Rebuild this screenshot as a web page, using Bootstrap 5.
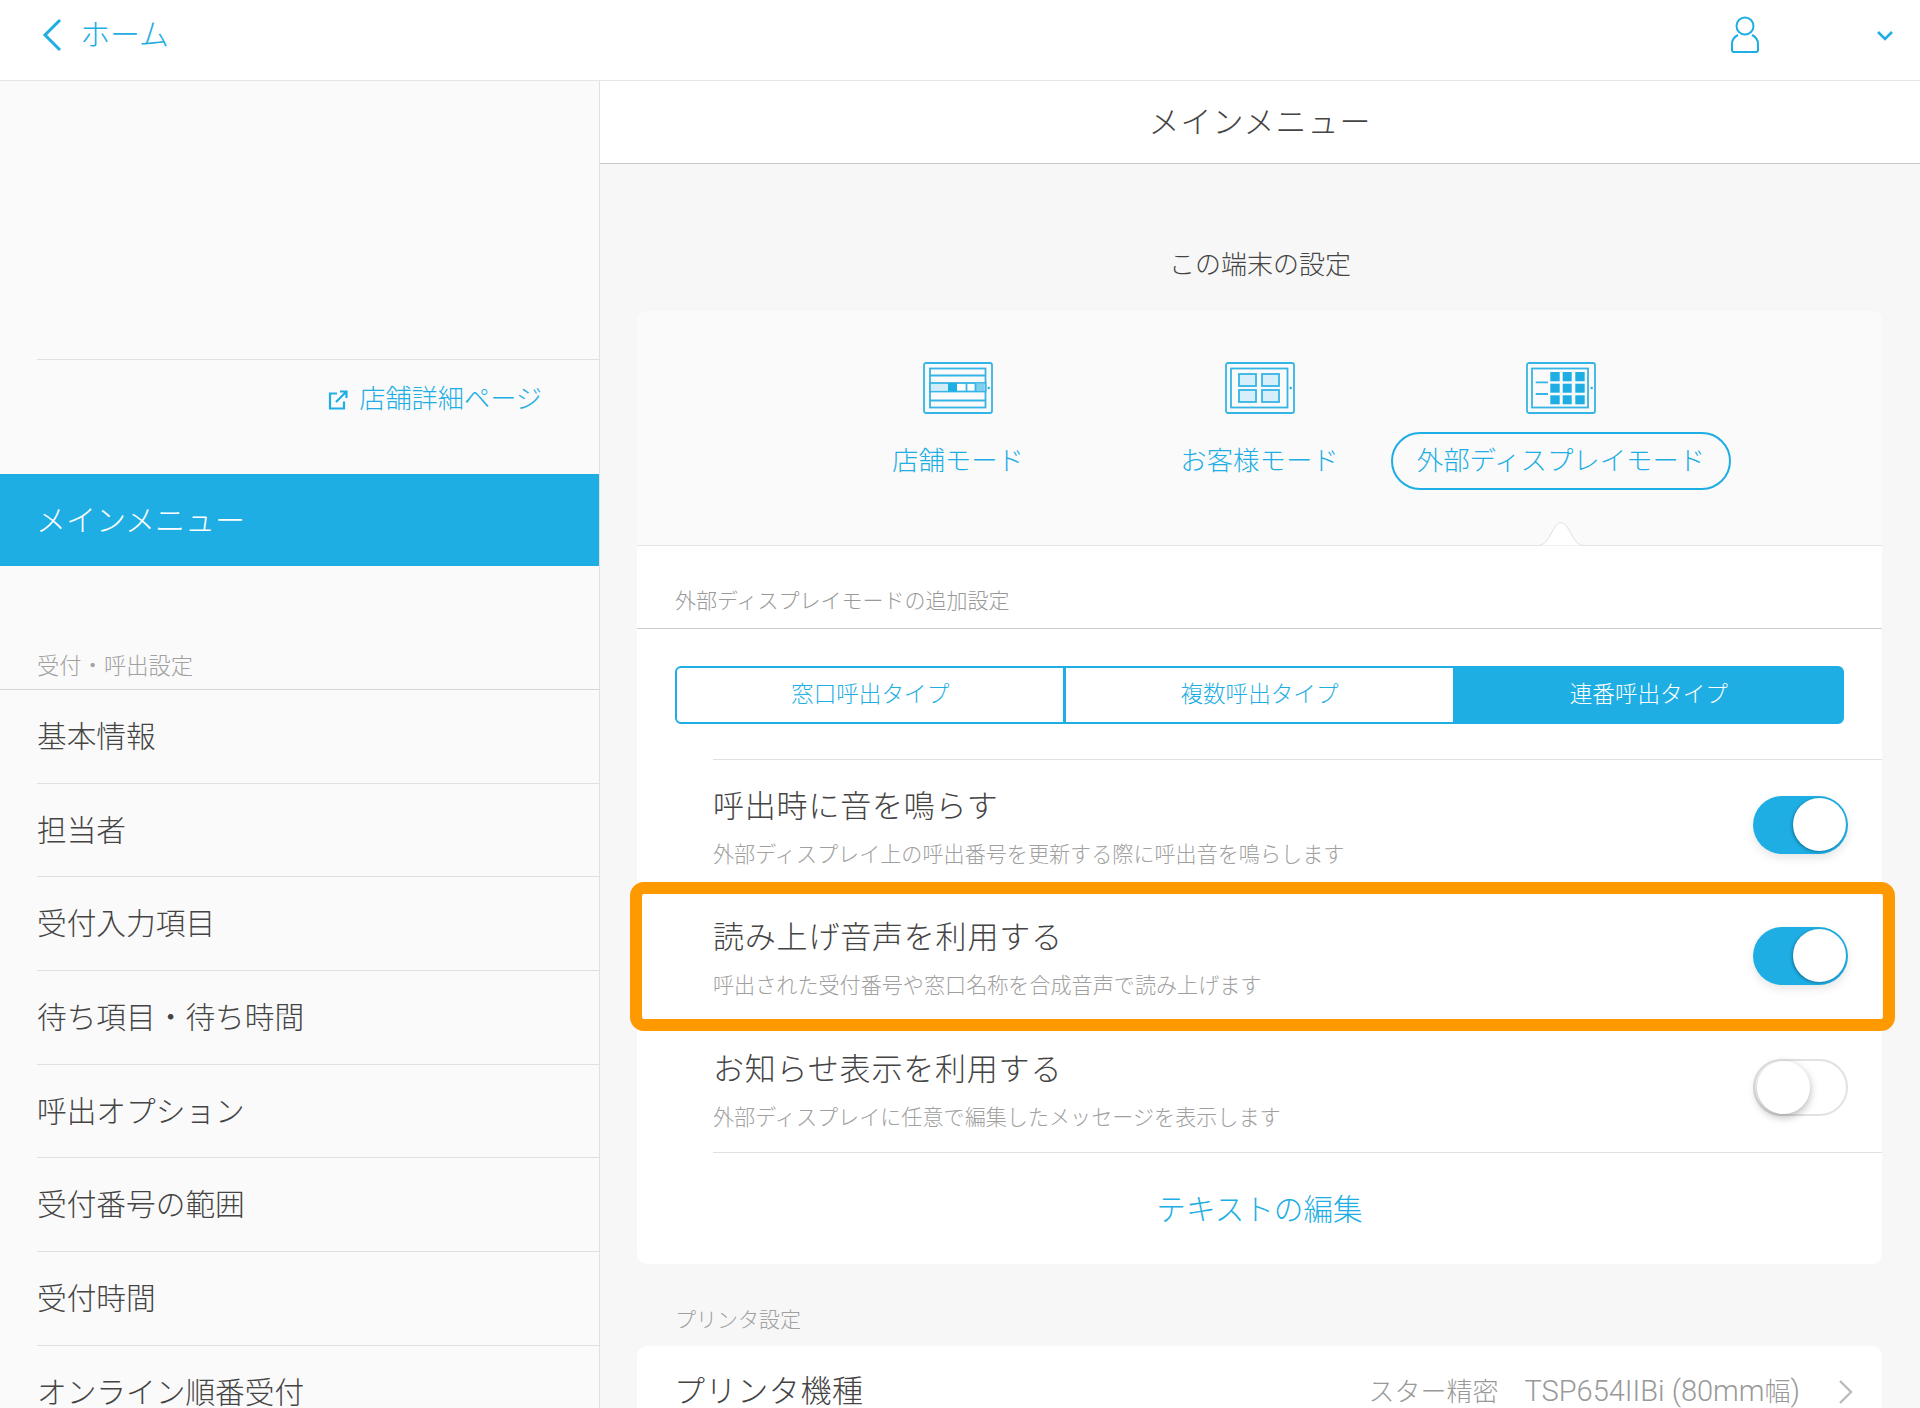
<!DOCTYPE html>
<html lang="ja">
<head>
  <meta charset="UTF-8">
  <meta name="viewport" content="width=device-width, initial-scale=1">
  <title>メインメニュー</title>
  <link href="https://cdn.jsdelivr.net/npm/bootstrap@5.3.0/dist/css/bootstrap.min.css" rel="stylesheet">
  <style>
    html, body { height: 100%; overflow: hidden; }
    body { font-family: "Roboto", "Noto Sans CJK JP", sans-serif; font-weight: 300; color: #444; background: #f7f7f7; }
    a { text-decoration: none; color: #1eaee3; }
    .top-bar { height: 81px; background: #fff; border-bottom: 1px solid #e5e5e5; padding: 0 27px 10px 42px; }
    .top-home { font-size: 30px; line-height: 1; gap: 18px; padding-bottom: 1px; }
    .page-body { height: calc(100% - 81px); }
    .side-col { width: 600px; flex: none; background: #fafafa; border-right: 1px solid #e0e0e0; overflow: hidden; }
    .side-space { height: 279px; margin-left: 37px; border-bottom: 1px solid #e0e0e0; }
    .shop-link { height: 114px; padding: 0 57px 34px 0; font-size: 26.2px; gap: 11px; }
    .side-active { height: 92px; background: #1eaee3; color: #fff; font-size: 30px; padding-left: 36px; }
    .side-head { height: 124px; padding: 0 0 6px 37px; font-size: 22.3px; color: #a0a0a0; border-bottom: 1px solid #d5d5d5; }
    .side-list .list-group-item { height: 93.7px; margin-left: 37px; padding: 1.5px 0 0; background: transparent; border-color: #e0e0e0; font-size: 29.7px; color: #444; display: flex; align-items: center; }
    .main-col { flex: 1; min-width: 0; overflow: hidden; }
    .main-title { height: 83px; padding-top: 2px; background: #fff; border-bottom: 1px solid #c8c8c8; font-size: 31px; letter-spacing: 1px; }
    .sec-title { padding-top: 81px; height: 147px; line-height: 40px; font-size: 26px; text-align: center; }
    .set-card { margin: 0 38px 0 37px; background: #fff; border: 0; border-radius: 10px; }
    .mode-area { height: 235px; padding-top: 51px; background: #fafafa; border-bottom: 1px solid #e5e5e5; border-radius: 10px 10px 0 0; position: relative; }
    .mode-col { width: 301.5px; }
    .mode-pill { height: 58px; margin-top: 18px; padding: 2px 24px 0; border: 2px solid transparent; border-radius: 29px; font-size: 26.4px; white-space: nowrap; color: #1eaee3; }
    .mode-pill.is-on { border-color: #1eaee3; }
    .mode-notch { position: absolute; left: 902px; bottom: -1px; }
    .sub-head { height: 83px; padding: 0 0 12px 38px; font-size: 21px; line-height: 30px; color: #999; border-bottom: 1px solid #ccc; }
    .seg-wrap { padding: 37px 38px 35px; }
    .seg-wrap .btn { height: 58px; font-size: 22.6px; font-weight: 300; color: #1eaee3; background: #fff; border: 2px solid #1eaee3; border-radius: 6px; padding: 0; display: flex; align-items: center; justify-content: center; flex: 1 1 0; }
    .seg-wrap .btn.is-on { background: #1eaee3; color: #fff; flex-basis: 3px; }
    .set-rows { padding-left: 76px; }
    .set-row { height: 131.3px; border-top: 1px solid #e0e0e0; padding-right: 34px; position: relative; }
    .row-name { padding-top: 27px; font-size: 31px; letter-spacing: .8px; line-height: 40px; }
    .row-desc { margin-top: 13px; font-size: 21.1px; line-height: 30px; color: #a0a0a0; }
    .toggle { width: 95px; height: 58px; margin-top: 36px; padding: 2px; border-radius: 29px; background: #1eaee3; box-shadow: 0 4px 10px rgba(0,0,0,.1); flex: none; display: flex; justify-content: flex-end; }
    .toggle-knob { width: 53px; height: 53px; border-radius: 50%; background: #fff; box-shadow: -1px 1px 3px rgba(0,50,80,.45); }
    .toggle.is-off { background: #fff; border: 2px solid #e2e2e2; padding: 0 2px; height: 57px; justify-content: flex-start; box-shadow: none; }
    .toggle.is-off .toggle-knob { box-shadow: 0 3px 8px rgba(0,0,0,.3); }
    .mark-box { position: absolute; z-index: 2; left: -83px; right: -13px; top: -9px; height: 149px; border: 12px solid #f90; border-radius: 14px; pointer-events: none; }
    .edit-row { height: 112px; border-top: 1px solid #e0e0e0; margin-left: 76px; margin-top: -1px; padding: 3px 76px 0 0; font-size: 29.6px; }
    .printer-head { height: 82px; padding: 0 0 11px 75px; font-size: 21px; line-height: 30px; color: #a0a0a0; }
    .printer-row { height: 90px; padding: 2px 28px 0 37px; font-size: 31px; letter-spacing: .6px; }
    .printer-val { font-size: 26px; letter-spacing: 0; color: #999; gap: 38px; }
    .printer-num { font-size: 29px; }
  </style>
</head>
<body>

<div class="top-bar d-flex justify-content-between align-items-center">
  <a href="#" class="top-home d-flex align-items-center">
    <svg width="20" height="34" viewBox="0 0 20 34" fill="none" stroke="#1eaee3" stroke-width="3"><path d="M18 2 3 17l15 15"/></svg>
    ホーム
  </a>
  <div class="d-flex align-items-center">
    <svg width="30" height="38" viewBox="0 0 30 38" fill="none" stroke="#1eaee3" stroke-width="2"><circle cx="15" cy="10" r="8.5"/><path d="M8 19c-4 2-6 5-6 9v6c0 1 1 2 2 2h22c1 0 2-1 2-2v-6c0-4-2-7-6-9"/></svg>
    <svg style="margin-left:117px" width="16" height="11" viewBox="0 0 16 11" fill="none" stroke="#1eaee3" stroke-width="2.6"><path d="m1 2 7 7 7-7"/></svg>
  </div>
</div>

<div class="page-body d-flex">
  <div class="side-col">
    <div class="side-space"></div>
    <a href="#" class="shop-link d-flex justify-content-end align-items-center">
      <svg width="20" height="20" viewBox="0 0 20 20" fill="none" stroke="#1eaee3" stroke-width="2.2"><path d="M9 3.5H2v15h14v-7M8 12 18 2M12 1.5h6.5V8"/></svg>
      店舗詳細ページ
    </a>
    <div class="side-active d-flex align-items-center">メインメニュー</div>
    <div class="side-head d-flex align-items-end">受付・呼出設定</div>
    <ul class="side-list list-group list-group-flush">
      <li class="list-group-item">基本情報</li>
      <li class="list-group-item">担当者</li>
      <li class="list-group-item">受付入力項目</li>
      <li class="list-group-item">待ち項目・待ち時間</li>
      <li class="list-group-item">呼出オプション</li>
      <li class="list-group-item">受付番号の範囲</li>
      <li class="list-group-item">受付時間</li>
      <li class="list-group-item">オンライン順番受付</li>
    </ul>
  </div>

  <div class="main-col">
    <div class="main-title d-flex justify-content-center align-items-center">メインメニュー</div>
    <div class="sec-title">この端末の設定</div>

    <div class="set-card">
      <div class="mode-area d-flex justify-content-center">
        <div class="mode-col d-flex flex-column align-items-center">
          <svg width="70" height="52" viewBox="0 0 70 52" fill="none" stroke="#35b5e5" stroke-width="1.8">
            <rect x="1" y="1" width="68" height="50" rx="2"/><rect x="7" y="6.5" width="55.5" height="39"/>
            <path d="M7 13.5h55.5M7 38.5h55.5"/>
            <rect x="7" y="21" width="55.5" height="8.5" fill="#fff"/>
            <rect x="8" y="22" width="17.5" height="6.5" fill="#d0ecf9" stroke="none"/><rect x="25" y="21" width="9" height="8.5" fill="#1eaee3" stroke="none"/><rect x="52.5" y="21.5" width="9" height="7.5" fill="#7fd0ef" stroke="none"/><path d="M43.5 21v8.5M52.5 21v8.5"/>
            <circle cx="65.7" cy="26" r="1.2" fill="#1eaee3" stroke="none"/>
          </svg>
          <a href="#" class="mode-pill d-flex align-items-center">店舗モード</a>
        </div>
        <div class="mode-col d-flex flex-column align-items-center">
          <svg width="70" height="52" viewBox="0 0 70 52" fill="none" stroke="#35b5e5" stroke-width="1.8">
            <rect x="1" y="1" width="68" height="50" rx="2"/><rect x="6" y="6.5" width="56.5" height="39"/>
            <g fill="#d6effa"><rect x="14" y="12" width="17" height="12"/><rect x="37" y="12" width="17" height="12"/><rect x="14" y="28" width="17" height="12"/><rect x="37" y="28" width="17" height="12"/></g>
            <circle cx="65.7" cy="26" r="1.2" fill="#1eaee3" stroke="none"/>
          </svg>
          <a href="#" class="mode-pill d-flex align-items-center">お客様モード</a>
        </div>
        <div class="mode-col d-flex flex-column align-items-center">
          <svg width="70" height="52" viewBox="0 0 70 52" fill="none" stroke="#35b5e5" stroke-width="1.8">
            <rect x="1" y="1" width="68" height="50" rx="2"/><rect x="6" y="6.5" width="56" height="39"/>
            <g fill="#1eaee3" stroke="none"><rect x="24.3" y="10" width="9.4" height="9.3"/><rect x="36.7" y="10" width="9" height="9.3"/><rect x="49.3" y="10" width="9.4" height="9.3"/><rect x="24.3" y="21.7" width="9.4" height="9"/><rect x="36.7" y="21.7" width="9" height="9"/><rect x="49.3" y="21.7" width="9.4" height="9"/><rect x="24.3" y="33.3" width="9.4" height="9"/><rect x="36.7" y="33.3" width="9" height="9"/><rect x="49.3" y="33.3" width="9.4" height="9"/></g>
            <path d="M9.7 20.3H22M9.7 32H22"/>
            <circle cx="65.7" cy="26" r="1.2" fill="#1eaee3" stroke="none"/>
          </svg>
          <a href="#" class="mode-pill is-on d-flex align-items-center">外部ディスプレイモード</a>
        </div>
        <svg class="mode-notch" width="44" height="25" viewBox="0 0 44 25" fill="#fff" stroke="#e0e0e0"><path d="M0 24.5c10 0 14-23 22-23s12 23 22 23"/></svg>
      </div>

      <div class="sub-head d-flex align-items-end">外部ディスプレイモードの追加設定</div>

      <div class="seg-wrap">
        <div class="btn-group w-100" role="group">
          <a href="#" class="btn">窓口呼出タイプ</a>
          <a href="#" class="btn">複数呼出タイプ</a>
          <a href="#" class="btn is-on">連番呼出タイプ</a>
        </div>
      </div>

      <div class="set-rows">
        <div class="set-row d-flex justify-content-between">
          <div>
            <div class="row-name">呼出時に音を鳴らす</div>
            <div class="row-desc">外部ディスプレイ上の呼出番号を更新する際に呼出音を鳴らします</div>
          </div>
          <div class="toggle"><span class="toggle-knob"></span></div>
        </div>
        <div class="set-row d-flex justify-content-between">
          <div>
            <div class="row-name">読み上げ音声を利用する</div>
            <div class="row-desc">呼出された受付番号や窓口名称を合成音声で読み上げます</div>
          </div>
          <div class="toggle"><span class="toggle-knob"></span></div>
          <span class="mark-box"></span>
        </div>
        <div class="set-row d-flex justify-content-between">
          <div>
            <div class="row-name">お知らせ表示を利用する</div>
            <div class="row-desc">外部ディスプレイに任意で編集したメッセージを表示します</div>
          </div>
          <div class="toggle is-off"><span class="toggle-knob"></span></div>
        </div>
      </div>
      <a href="#" class="edit-row d-flex justify-content-center align-items-center">テキストの編集</a>
    </div>

    <div class="printer-head d-flex align-items-end">プリンタ設定</div>
    <div class="set-card overflow-hidden">
      <div class="printer-row d-flex justify-content-between align-items-center">
        <span>プリンタ機種</span>
        <span class="printer-val d-flex align-items-center">
          <span>スター精密　<span class="printer-num">TSP654IIBi (80mm</span>幅<span class="printer-num">)</span></span>
          <svg width="16" height="26" viewBox="0 0 16 26" fill="none" stroke="#bbb" stroke-width="2.4"><path d="m2 2 11 11L2 24"/></svg>
        </span>
      </div>
    </div>
  </div>
</div>

<script src="https://cdn.jsdelivr.net/npm/bootstrap@5.3.0/dist/js/bootstrap.bundle.min.js"></script>
</body>
</html>
